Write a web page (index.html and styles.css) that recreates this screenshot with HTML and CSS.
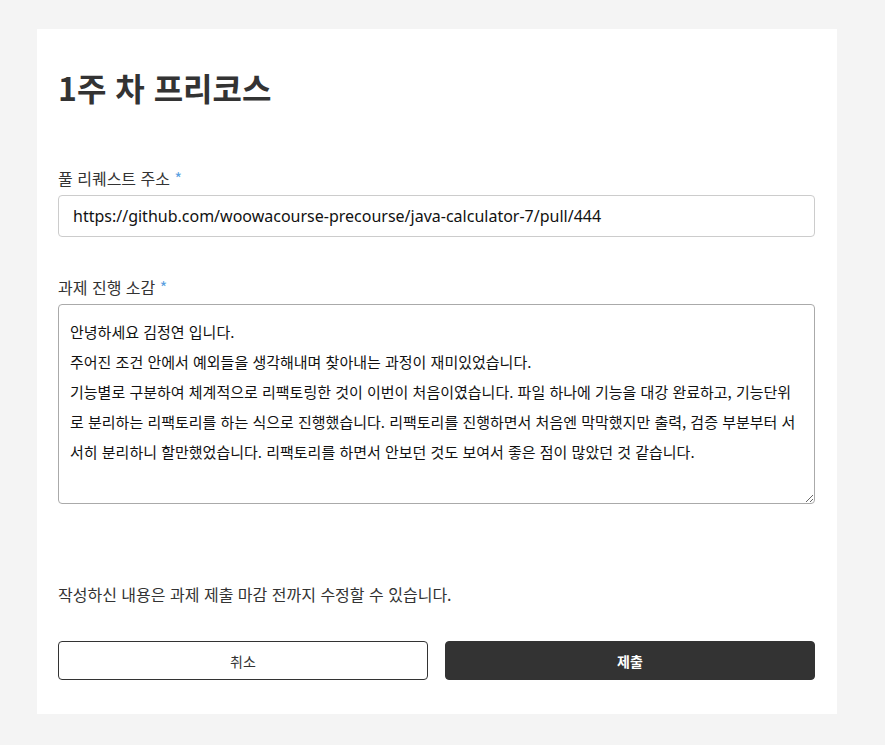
FILE: index.html
```html
<!DOCTYPE html>
<html lang="ko">
<head>
<meta charset="utf-8">
<title>1주 차 프리코스</title>
<link rel="stylesheet" href="styles.css">
</head>
<body>
<main class="card">
  <h1 class="title">1주 차 프리코스</h1>
  <form class="form">
    <div class="field">
      <label class="label" for="pr">풀 리퀘스트 주소 <span class="req">*</span></label>
      <input class="input" id="pr" type="text" value="https://github.com/woowacourse-precourse/java-calculator-7/pull/444">
    </div>
    <div class="field">
      <label class="label" for="review">과제 진행 소감 <span class="req">*</span></label>
      <textarea class="textarea" id="review">안녕하세요 김정연 입니다.
주어진 조건 안에서 예외들을 생각해내며 찾아내는 과정이 재미있었습니다.
기능별로 구분하여 체계적으로 리팩토링한 것이 이번이 처음이였습니다. 파일 하나에 기능을 대강 완료하고, 기능단위로 분리하는 리팩토리를 하는 식으로 진행했습니다. 리팩토리를 진행하면서 처음엔 막막했지만 출력, 검증 부분부터 서서히 분리하니 할만했었습니다. 리팩토리를 하면서 안보던 것도 보여서 좋은 점이 많았던 것 같습니다.</textarea>
    </div>
    <p class="notice">작성하신 내용은 과제 제출 마감 전까지 수정할 수 있습니다.</p>
    <div class="actions">
      <button type="button" class="btn btn-cancel">취소</button>
      <button type="submit" class="btn btn-submit">제출</button>
    </div>
  </form>
</main>
</body>
</html>
```
FILE: styles.css
```css
html, body {
  margin: 0;
  padding: 0;
  background: #f4f4f4;
}
body {
  font-family: "Noto Sans", "Noto Sans CJK KR", sans-serif;
  color: #333;
}
.card {
  box-sizing: border-box;
  width: 800px;
  margin: 29px 0 0 37px;
  padding: 36px 22px 34px 21px;
  background: #fff;
}
.title {
  margin: 0;
  font-family: "Noto Sans CJK KR", sans-serif;
  font-size: 32px;
  line-height: 44px;
  font-weight: 700;
  color: #333;
}
.form {
  margin-top: 58px;
  display: flex;
  flex-direction: column;
}
.field {
  display: flex;
  flex-direction: column;
  gap: 6px;
  margin-bottom: 39px;
}
.label {
  font-family: "Noto Sans CJK KR", sans-serif;
  font-size: 16px;
  line-height: 22px;
  color: #333;
}
.req {
  color: #5a9fe0;
}
.input {
  box-sizing: border-box;
  width: 100%;
  height: 42px;
  padding: 0 14px;
  border: 1px solid #ccc;
  border-radius: 4px;
  font-family: "Noto Sans", "Noto Sans CJK KR", sans-serif;
  font-size: 16px;
  color: #111;
  background: #fff;
  outline: none;
}
.textarea {
  box-sizing: border-box;
  width: 100%;
  height: 200px;
  padding: 12px 11px;
  border: 1px solid #aaa;
  border-radius: 4px;
  font-family: "Noto Sans CJK KR", sans-serif;
  font-size: 15px;
  line-height: 30px;
  color: #111;
  background: #fff;
  resize: vertical;
  outline: none;
}
.notice {
  margin: 40px 0 0;
  font-family: "Noto Sans CJK KR", sans-serif;
  font-size: 16px;
  line-height: 22px;
  color: #333;
}
.actions {
  margin-top: 36px;
  display: flex;
  gap: 17px;
}
.btn {
  flex: 1;
  height: 39px;
  border-radius: 4px;
  font-family: "Noto Sans CJK KR", sans-serif;
  font-size: 14px;
  cursor: pointer;
}
.btn-cancel {
  background: #fff;
  border: 1px solid #333;
  color: #333;
}
.btn-submit {
  background: #333;
  border: 1px solid #333;
  color: #fff;
  font-weight: 700;
}
```
